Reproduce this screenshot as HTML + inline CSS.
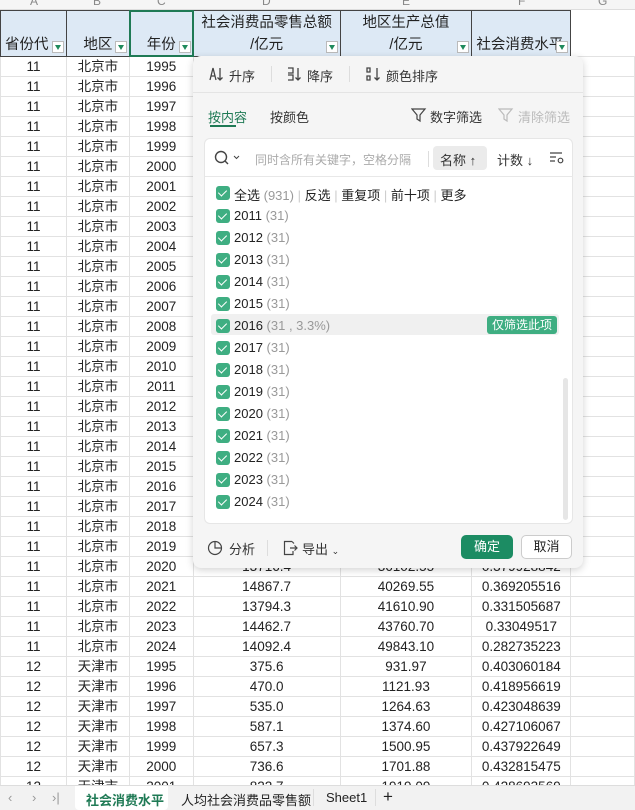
<!DOCTYPE html>
<html><head><meta charset="utf-8"><style>
*{box-sizing:border-box;margin:0;padding:0}
body{width:635px;height:810px;overflow:hidden;background:#fff;font-family:"Liberation Sans","Noto Sans CJK SC",sans-serif;position:relative;color:#222}
.colhdr{position:absolute;top:0;left:0;width:635px;height:10px;background:#f5f5f5;border-bottom:1px solid #ddd}
.colhdr span{position:absolute;top:-6px;font-size:12px;color:#888}
table{position:absolute;top:10px;left:0;border-collapse:collapse;table-layout:fixed}
td{border:1px solid #e2e2e2;height:20px;font-size:13.5px;text-align:center;white-space:nowrap;overflow:hidden;padding:0;line-height:19px}
tr.h td{height:46px;background:#dde9f5;border:1px solid #444;vertical-align:bottom;font-size:14.5px;line-height:22px;position:relative}
.dd{position:absolute;right:2px;bottom:3px;width:12px;height:12px;background:#fff;border:1px solid #bbb}
.dd:after{content:"";position:absolute;left:2px;top:3px;border-left:3.5px solid transparent;border-right:3.5px solid transparent;border-top:5px solid #1f8a5c}
.sel{position:absolute;left:129px;top:10px;width:65px;height:47px;border:2px solid #1f7a55}
.pop{position:absolute;left:193px;top:56px;width:390px;height:512px;background:#f5f5f5;border-radius:8px;box-shadow:0 2px 8px rgba(0,0,0,.18)}
.pop .t{position:absolute;font-size:13px;color:#333;white-space:nowrap}
.pop svg{position:absolute}
.inner{position:absolute;left:11px;top:82px;width:369px;height:386px;background:#fff;border:1px solid #e6e6e6;border-radius:6px}
.cb{position:absolute;left:11px;width:14px;height:14px;background:#3fae82;border-radius:3px}
.cb:after{content:"";position:absolute;left:4px;top:2px;width:4px;height:7px;border:solid #fff;border-width:0 1.6px 1.6px 0;transform:rotate(45deg)}
.it{position:absolute;left:29px;font-size:13px;color:#222;white-space:nowrap}
.it i{font-style:normal;color:#999}
.tabs{position:absolute;left:0;top:785px;width:635px;height:25px;background:#f2f2f2;border-top:1px solid #ddd;font-size:13px}
.tabs span{position:absolute;top:4px;white-space:nowrap}
</style></head><body>
<div class="colhdr"><span style="left:30px">A</span><span style="left:93px">B</span><span style="left:157px">C</span><span style="left:262px">D</span><span style="left:402px">E</span><span style="left:518px">F</span><span style="left:598px">G</span></div>
<table>
<colgroup><col style="width:66px"><col style="width:63px"><col style="width:64px"><col style="width:147px"><col style="width:132px"><col style="width:99px"><col style="width:64px"></colgroup>
<tr class="h"><td style="text-align:left;padding-left:4px">省份代<div class="dd"></div></td><td>地区<div class="dd"></div></td><td>年份<div class="dd"></div></td><td>社会消费品零售总额<br>/亿元<div class="dd"></div></td><td>地区生产总值<br>/亿元<div class="dd"></div></td><td style="text-align:left;padding-left:4px">社会消费水平<div class="dd"></div></td><td style="border:none;border-bottom:1px solid #e2e2e2;background:#fff"></td></tr>
<tr><td>11</td><td>北京市</td><td>1995</td><td></td><td></td><td></td><td></td></tr>
<tr><td>11</td><td>北京市</td><td>1996</td><td></td><td></td><td></td><td></td></tr>
<tr><td>11</td><td>北京市</td><td>1997</td><td></td><td></td><td></td><td></td></tr>
<tr><td>11</td><td>北京市</td><td>1998</td><td></td><td></td><td></td><td></td></tr>
<tr><td>11</td><td>北京市</td><td>1999</td><td></td><td></td><td></td><td></td></tr>
<tr><td>11</td><td>北京市</td><td>2000</td><td></td><td></td><td></td><td></td></tr>
<tr><td>11</td><td>北京市</td><td>2001</td><td></td><td></td><td></td><td></td></tr>
<tr><td>11</td><td>北京市</td><td>2002</td><td></td><td></td><td></td><td></td></tr>
<tr><td>11</td><td>北京市</td><td>2003</td><td></td><td></td><td></td><td></td></tr>
<tr><td>11</td><td>北京市</td><td>2004</td><td></td><td></td><td></td><td></td></tr>
<tr><td>11</td><td>北京市</td><td>2005</td><td></td><td></td><td></td><td></td></tr>
<tr><td>11</td><td>北京市</td><td>2006</td><td></td><td></td><td></td><td></td></tr>
<tr><td>11</td><td>北京市</td><td>2007</td><td></td><td></td><td></td><td></td></tr>
<tr><td>11</td><td>北京市</td><td>2008</td><td></td><td></td><td></td><td></td></tr>
<tr><td>11</td><td>北京市</td><td>2009</td><td></td><td></td><td></td><td></td></tr>
<tr><td>11</td><td>北京市</td><td>2010</td><td></td><td></td><td></td><td></td></tr>
<tr><td>11</td><td>北京市</td><td>2011</td><td></td><td></td><td></td><td></td></tr>
<tr><td>11</td><td>北京市</td><td>2012</td><td></td><td></td><td></td><td></td></tr>
<tr><td>11</td><td>北京市</td><td>2013</td><td></td><td></td><td></td><td></td></tr>
<tr><td>11</td><td>北京市</td><td>2014</td><td></td><td></td><td></td><td></td></tr>
<tr><td>11</td><td>北京市</td><td>2015</td><td></td><td></td><td></td><td></td></tr>
<tr><td>11</td><td>北京市</td><td>2016</td><td></td><td></td><td></td><td></td></tr>
<tr><td>11</td><td>北京市</td><td>2017</td><td></td><td></td><td></td><td></td></tr>
<tr><td>11</td><td>北京市</td><td>2018</td><td></td><td></td><td></td><td></td></tr>
<tr><td>11</td><td>北京市</td><td>2019</td><td></td><td></td><td></td><td></td></tr>
<tr><td>11</td><td>北京市</td><td>2020</td><td>13716.4</td><td>36102.55</td><td>0.379928842</td><td></td></tr>
<tr><td>11</td><td>北京市</td><td>2021</td><td>14867.7</td><td>40269.55</td><td>0.369205516</td><td></td></tr>
<tr><td>11</td><td>北京市</td><td>2022</td><td>13794.3</td><td>41610.90</td><td>0.331505687</td><td></td></tr>
<tr><td>11</td><td>北京市</td><td>2023</td><td>14462.7</td><td>43760.70</td><td>0.33049517</td><td></td></tr>
<tr><td>11</td><td>北京市</td><td>2024</td><td>14092.4</td><td>49843.10</td><td>0.282735223</td><td></td></tr>
<tr><td>12</td><td>天津市</td><td>1995</td><td>375.6</td><td>931.97</td><td>0.403060184</td><td></td></tr>
<tr><td>12</td><td>天津市</td><td>1996</td><td>470.0</td><td>1121.93</td><td>0.418956619</td><td></td></tr>
<tr><td>12</td><td>天津市</td><td>1997</td><td>535.0</td><td>1264.63</td><td>0.423048639</td><td></td></tr>
<tr><td>12</td><td>天津市</td><td>1998</td><td>587.1</td><td>1374.60</td><td>0.427106067</td><td></td></tr>
<tr><td>12</td><td>天津市</td><td>1999</td><td>657.3</td><td>1500.95</td><td>0.437922649</td><td></td></tr>
<tr><td>12</td><td>天津市</td><td>2000</td><td>736.6</td><td>1701.88</td><td>0.432815475</td><td></td></tr>
<tr><td>12</td><td>天津市</td><td>2001</td><td>822.7</td><td>1919.09</td><td>0.428693569</td><td></td></tr>
</table>
<div class="sel"></div>
<div class="pop">
<svg style="left:15px;top:10px" width="18" height="16" viewBox="0 0 18 16" fill="none" stroke="#444" stroke-width="1.3"><path d="M2 14L5 2L8 14M3 10H7M12 2V14M9.5 11.5L12 14L14.5 11.5"/></svg>
<div class="t" style="left:36px;top:10px">升序</div>
<div style="position:absolute;left:78px;top:10px;width:1px;height:16px;background:#ddd"></div>
<svg style="left:93px;top:10px" width="18" height="16" viewBox="0 0 18 16" fill="none" stroke="#444" stroke-width="1.3"><path d="M2 2H7V7H2M2 9H7V14H2M12 2V14M9.5 11.5L12 14L14.5 11.5"/></svg>
<div class="t" style="left:114px;top:10px">降序</div>
<div style="position:absolute;left:156px;top:10px;width:1px;height:16px;background:#ddd"></div>
<svg style="left:172px;top:10px" width="18" height="16" viewBox="0 0 18 16" fill="none" stroke="#444" stroke-width="1.3"><path d="M2 2H5V6H2ZM2 10H5V14H2ZM12 2V14M9.5 11.5L12 14L14.5 11.5"/></svg>
<div class="t" style="left:193px;top:10px">颜色排序</div>
<div style="position:absolute;left:0;top:36px;width:390px;height:1px;background:#e4e4e4"></div>
<div class="t" style="left:15px;top:51px;color:#1f7a55">按内容</div>
<div style="position:absolute;left:17px;top:69px;width:26px;height:2px;background:#1f7a55"></div>
<div class="t" style="left:77px;top:51px">按颜色</div>
<svg style="left:218px;top:52px" width="16" height="15" viewBox="0 0 16 15" fill="none" stroke="#444" stroke-width="1.2"><path d="M1 1H14L9 7V13L6 11V7Z"/></svg>
<div class="t" style="left:237px;top:51px">数字筛选</div>
<svg style="left:305px;top:52px" width="16" height="15" viewBox="0 0 16 15" fill="none" stroke="#bbb" stroke-width="1.2"><path d="M1 1H14L9 7V13L6 11V7Z"/></svg>
<div class="t" style="left:325px;top:51px;color:#bbb">清除筛选</div>
<div class="inner">
<svg style="left:9px;top:11px" width="30" height="16" viewBox="0 0 30 16" fill="none" stroke="#444" stroke-width="1.4"><circle cx="7" cy="7" r="5.5"/><path d="M11 11L14 14"/><path d="M20 6L22.5 8.5L25 6" stroke-width="1"/></svg>
<div class="t" style="left:50px;top:12px;color:#aaa;font-size:12px">同时含所有关键字，空格分隔</div>
<div style="position:absolute;left:223px;top:12px;width:1px;height:16px;background:#ddd"></div>
<div style="position:absolute;left:228px;top:7px;width:54px;height:24px;background:#ebebeb;border-radius:4px"></div>
<div class="t" style="left:235px;top:11px">名称 ↑</div>
<div class="t" style="left:292px;top:11px">计数 ↓</div>
<svg style="left:344px;top:12px" width="16" height="14" viewBox="0 0 16 14" fill="none" stroke="#444" stroke-width="1.2"><path d="M1 2H13M1 6H7M1 10H6"/><circle cx="11.5" cy="9.5" r="2.3"/></svg>
<div style="position:absolute;left:0;top:37px;width:368px;height:1px;background:#e8e8e8"></div>
<div class="cb" style="top:47px"></div><div class="it" style="top:46px">全选 <i>(931)</i> <span style="color:#ccc">|</span> 反选 <span style="color:#ccc">|</span> 重复项 <span style="color:#ccc">|</span> 前十项 <span style="color:#ccc">|</span> 更多</div>
<div class="cb" style="top:70px"></div><div class="it" style="top:69px">2011 <i>(31)</i></div>
<div class="cb" style="top:92px"></div><div class="it" style="top:91px">2012 <i>(31)</i></div>
<div class="cb" style="top:114px"></div><div class="it" style="top:113px">2013 <i>(31)</i></div>
<div class="cb" style="top:136px"></div><div class="it" style="top:135px">2014 <i>(31)</i></div>
<div class="cb" style="top:158px"></div><div class="it" style="top:157px">2015 <i>(31)</i></div>
<div style="position:absolute;left:6px;top:175px;width:348px;height:21px;background:#f0f0f0;border-radius:3px"></div>
<div class="cb" style="top:180px"></div><div class="it" style="top:179px">2016 <i>(31 , 3.3%)</i></div>
<div style="position:absolute;left:282px;top:177px;width:70px;height:18px;background:#3fae82;border-radius:3px;color:#fff;font-size:12px;text-align:center;line-height:18px">仅筛选此项</div>
<div class="cb" style="top:202px"></div><div class="it" style="top:201px">2017 <i>(31)</i></div>
<div class="cb" style="top:224px"></div><div class="it" style="top:223px">2018 <i>(31)</i></div>
<div class="cb" style="top:246px"></div><div class="it" style="top:245px">2019 <i>(31)</i></div>
<div class="cb" style="top:268px"></div><div class="it" style="top:267px">2020 <i>(31)</i></div>
<div class="cb" style="top:290px"></div><div class="it" style="top:289px">2021 <i>(31)</i></div>
<div class="cb" style="top:312px"></div><div class="it" style="top:311px">2022 <i>(31)</i></div>
<div class="cb" style="top:334px"></div><div class="it" style="top:333px">2023 <i>(31)</i></div>
<div class="cb" style="top:356px"></div><div class="it" style="top:355px">2024 <i>(31)</i></div>
<div style="position:absolute;left:358px;top:239px;width:5px;height:142px;background:#e6e6e6;border-radius:3px"></div>
</div>
<svg style="left:14px;top:484px" width="16" height="16" viewBox="0 0 16 16" fill="none" stroke="#444" stroke-width="1.2"><circle cx="8" cy="8" r="6.5"/><path d="M8 1.5V8H14.5"/></svg>
<div class="t" style="left:36px;top:483px">分析</div>
<div style="position:absolute;left:74px;top:484px;width:1px;height:16px;background:#ddd"></div>
<svg style="left:89px;top:484px" width="16" height="16" viewBox="0 0 16 16" fill="none" stroke="#444" stroke-width="1.2"><path d="M10 1.5H2.5V14.5H11V11M8 8H15M12.5 5.5L15 8L12.5 10.5M10 1.5L12 3.5"/></svg>
<div class="t" style="left:109px;top:483px">导出 <span style="font-size:9px">⌄</span></div>
<div style="position:absolute;left:268px;top:479px;width:52px;height:24px;background:#1c8c63;border-radius:5px;color:#fff;font-size:13px;text-align:center;line-height:24px">确定</div>
<div style="position:absolute;left:328px;top:479px;width:51px;height:24px;background:#fff;border:1px solid #ccc;border-radius:5px;font-size:13px;text-align:center;line-height:22px">取消</div>
</div>
<div class="tabs">
<span style="left:8px;color:#999">‹</span><span style="left:32px;color:#999">›</span><span style="left:52px;color:#999">›|</span>
<div style="position:absolute;left:75px;top:0;width:93px;height:24px;background:#fff;border-radius:0 0 4px 4px"></div>
<span style="left:86px;color:#1f7a55;font-weight:bold">社会消费水平</span>
<span style="left:181px">人均社会消费品零售额</span>
<span style="left:313px;top:3px;width:1px;height:17px;background:#ddd"></span>
<span style="left:326px">Sheet1</span>
<span style="left:375px;top:3px;width:1px;height:17px;background:#ddd"></span>
<span style="left:383px;top:1px;font-size:17px">+</span>
</div>
</body></html>
